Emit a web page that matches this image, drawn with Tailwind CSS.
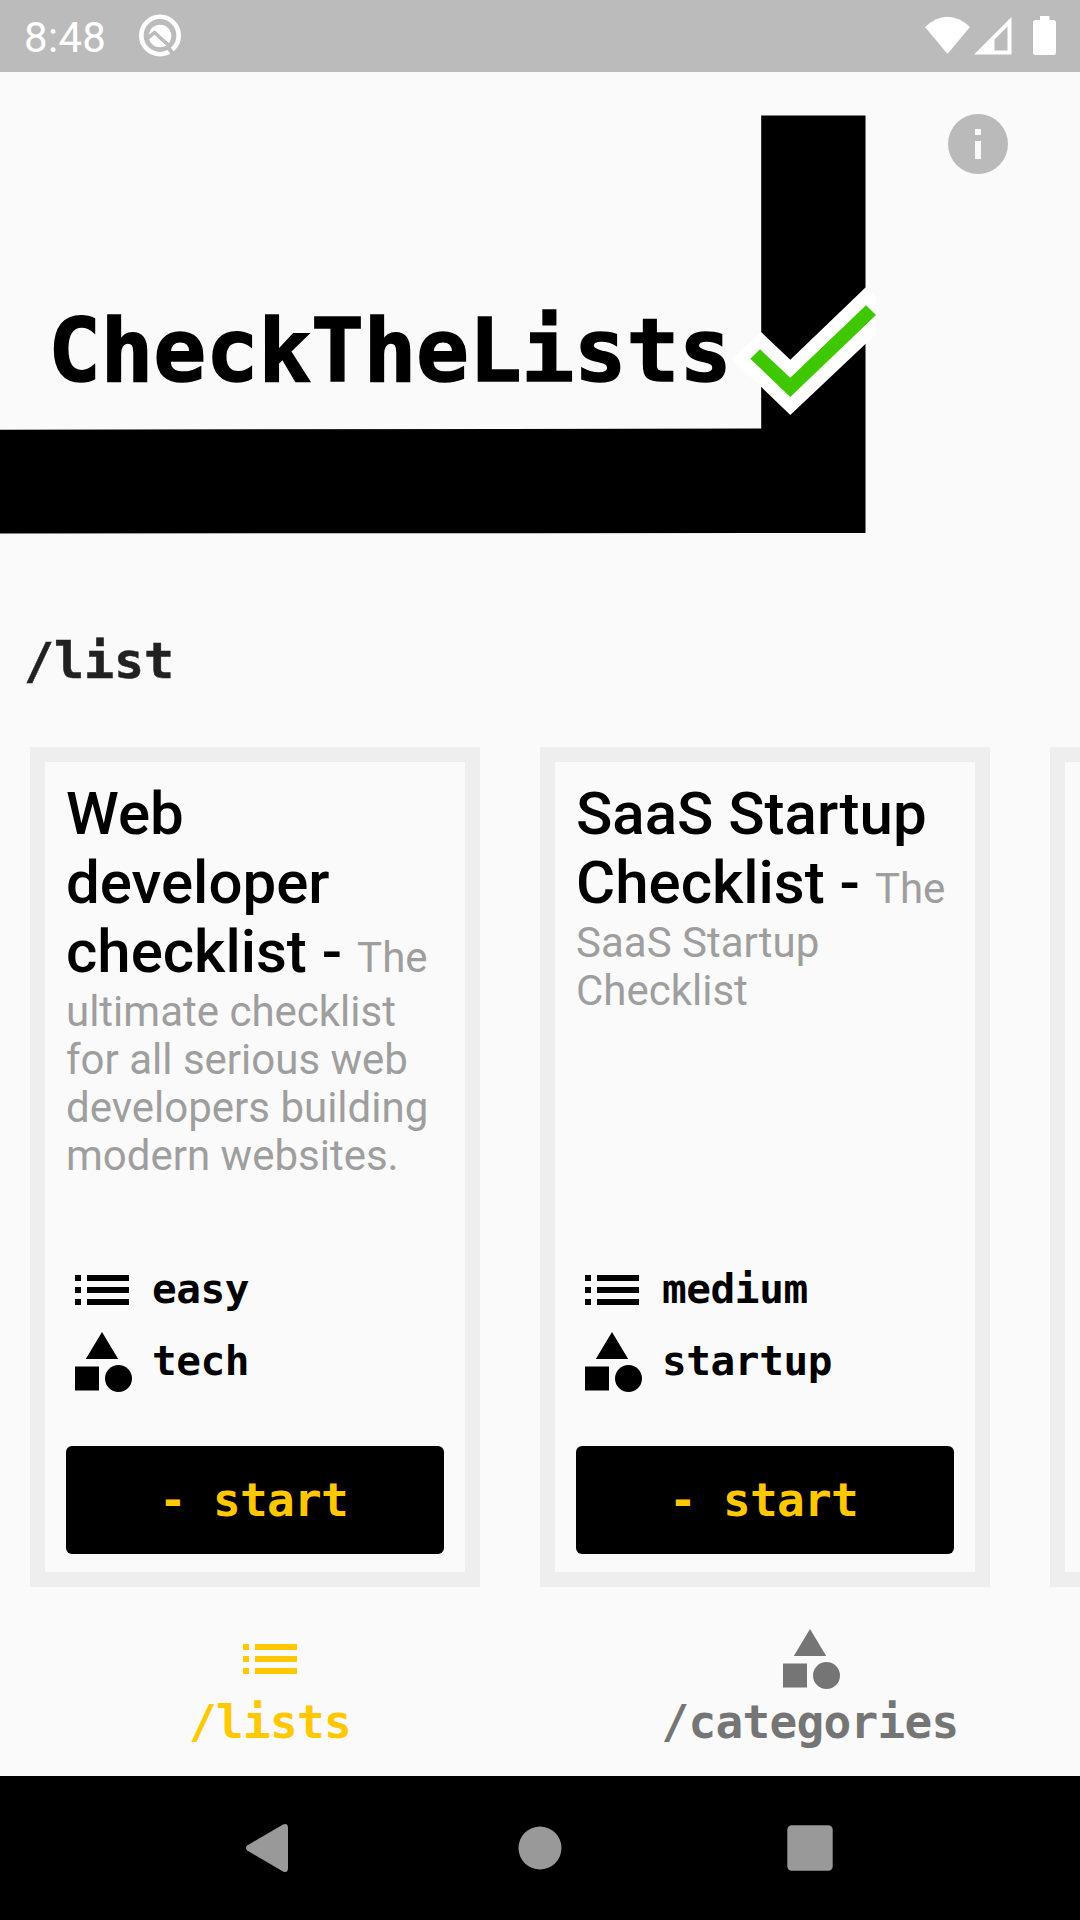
<!DOCTYPE html>
<html lang="en">
<head>
<meta charset="utf-8">
<title>CheckTheLists</title>
<script src="https://cdn.jsdelivr.net/npm/@tailwindcss/browser@4"></script>
</head>
<body class="bg-[#fafafa]">
<svg class="hidden">
  <symbol id="list" viewBox="0 0 24 24"><path d="M3 7h2v2H3zM3 11h2v2H3zM3 15h2v2H3zM7 7h14v2H7zM7 11h14v2H7zM7 15h14v2H7z"/></symbol>
  <symbol id="category" viewBox="0 0 24 24"><path d="M12 2 6.6 11h10.8zM3 13.500h8v8H3z"/><circle cx="17.500" cy="17.500" r="4.500"/></symbol>
</svg>
<div class="flex h-[1920px] w-[1080px] flex-col overflow-hidden bg-[#fafafa] font-['Roboto',sans-serif]">
  <!-- status bar -->
  <div class="flex h-[72px] shrink-0 items-start bg-[#bbbbbb] text-white">
    <span class="w-[138px] pl-[24px] text-[42px] leading-[76px] tracking-[0.3px]">8:48</span>
    <svg class="mt-[14px] h-[44px] w-[44px]" viewBox="138 14 44 44">
      <circle cx="160" cy="35.500" r="18.700" fill="none" stroke="#fff" stroke-width="4.600"/>
      <circle cx="160" cy="36" r="11.300" fill="#fff"/>
      <path d="M147 38.500L154.500 32.500 171 47.500" fill="none" stroke="#bbb" stroke-width="3.600"/>
      <path d="M167.500 46.500L174 55.500" fill="none" stroke="#bbb" stroke-width="4"/>
    </svg>
    <svg class="ml-auto mr-[20px] h-[72px] w-[140px]" viewBox="920 0 140 72" fill="#fff">
      <path d="M925 27Q947.500 6.500 970 27L947.500 54z"/>
      <path fill-rule="evenodd" d="M974 54.500H1011.500V17zM994.500 50.500V39.500L1007.500 26.500V50.500z"/>
      <path d="M1040 16h9.500v4h4a2.500 2.500 0 0 1 2.500 2.500v30a2.500 2.500 0 0 1-2.500 2.500h-18a2.500 2.500 0 0 1-2.500-2.500v-30a2.500 2.500 0 0 1 2.500-2.500h4.500z"/>
    </svg>
  </div>

  <!-- banner -->
  <header class="relative flex h-[540px] shrink-0 items-start justify-between">
    <svg class="absolute inset-0 h-[540px] w-[1080px]" viewBox="0 72 1080 540">
      <path d="M0 429.700L761.200 428.600V115.500H865.500V533L0 533.500z"/>
      <path d="M732 358.700L761 332 790.300 359.700 865.500 287.500 876 297V334L790.300 415z" fill="#fff"/>
      <path d="M750.300 358.700L760 349.300 790.300 377.700 866 305.300 876 315 790.300 397z" fill="#3fc800"/>
    </svg>
    <h1 class="relative mt-[234px] pl-[48px] font-['DejaVu_Sans_Mono',monospace] text-[88px] leading-[90px] font-bold tracking-[-0.4px] [-webkit-text-stroke:1.5px_black]">CheckTheLists</h1>
    <svg class="relative mt-[36px] mr-[66px] h-[72px] w-[72px]" viewBox="0 0 24 24" fill="#bababa"><path d="M12 2a10 10 0 1 0 0 20 10 10 0 0 0 0-20zm1 15h-2v-6h2zm0-8h-2V7h2z"/></svg>
  </header>

  <h2 class="h-[135px] shrink-0 pl-[24px] pt-[19px] font-['DejaVu_Sans_Mono',monospace] text-[50px] leading-[60px] font-bold tracking-[-0.1px] text-[#212121] [-webkit-text-stroke:0.5px_#212121]">/list</h2>

  <!-- cards -->
  <main class="flex h-[840px] shrink-0 gap-[60px] pl-[30px]">
    <article class="flex w-[450px] shrink-0 flex-col border-[15px] border-[#eeeeee] px-[21px] pt-[17px] pb-[18px]">
      <div class="h-[475px] text-[42px] leading-[48px] whitespace-nowrap text-[#9e9e9e]">
        <div><span class="text-[60px] leading-[69px] font-medium text-black">Web<br>developer<br>checklist - </span>The</div>
        <div class="mt-[2px]">ultimate checklist<br>for all serious web<br>developers building<br>modern websites.</div>
      </div>
      <div class="flex h-[72px] gap-[14px] font-['DejaVu_Sans_Mono',monospace] text-[41px] leading-[71px] font-bold tracking-[-0.4px]"><svg class="h-[72px] w-[72px]"><use href="#list"/></svg>easy</div>
      <div class="flex h-[72px] gap-[14px] font-['DejaVu_Sans_Mono',monospace] text-[41px] leading-[70px] font-bold tracking-[-0.4px]"><svg class="h-[72px] w-[72px]"><use href="#category"/></svg>tech</div>
      <button class="mt-auto h-[108px] rounded-[6px] bg-black pr-[3px] font-['DejaVu_Sans_Mono',monospace] text-[46px] leading-[106px] font-bold tracking-[-0.7px] text-[#ffc800]">- start</button>
    </article>
    <article class="flex w-[450px] shrink-0 flex-col border-[15px] border-[#eeeeee] px-[21px] pt-[17px] pb-[18px]">
      <div class="h-[475px] text-[42px] leading-[48px] whitespace-nowrap text-[#9e9e9e]">
        <div><span class="text-[60px] leading-[69px] font-medium text-black">SaaS Startup<br>Checklist - </span>The</div>
        <div class="mt-[2px]">SaaS Startup<br>Checklist</div>
      </div>
      <div class="flex h-[72px] gap-[14px] font-['DejaVu_Sans_Mono',monospace] text-[41px] leading-[71px] font-bold tracking-[-0.4px]"><svg class="h-[72px] w-[72px]"><use href="#list"/></svg>medium</div>
      <div class="flex h-[72px] gap-[14px] font-['DejaVu_Sans_Mono',monospace] text-[41px] leading-[70px] font-bold tracking-[-0.4px]"><svg class="h-[72px] w-[72px]"><use href="#category"/></svg>startup</div>
      <button class="mt-auto h-[108px] rounded-[6px] bg-black pr-[3px] font-['DejaVu_Sans_Mono',monospace] text-[46px] leading-[106px] font-bold tracking-[-0.7px] text-[#ffc800]">- start</button>
    </article>
    <article class="w-[450px] shrink-0 border-[15px] border-[#eeeeee]"></article>
  </main>

  <!-- tabs -->
  <nav class="grid h-[189px] shrink-0 grid-cols-2 pt-[36px] font-['DejaVu_Sans_Mono',monospace] text-[46px] leading-[54px] font-bold tracking-[-0.7px]">
    <a class="flex flex-col items-center text-[#ffc800]"><svg class="h-[72px] w-[72px] fill-current"><use href="#list"/></svg>/lists</a>
    <a class="flex flex-col items-center text-[#757575]"><svg class="h-[72px] w-[72px] fill-current"><use href="#category"/></svg>/categories</a>
  </nav>

  <!-- system navigation -->
  <div class="flex h-[144px] shrink-0 items-center justify-center gap-[198px] bg-black">
    <svg class="h-[72px] w-[72px]" viewBox="234 1812 72 72" fill="#999"><path d="M247.200 1845.500L283 1824.500Q288 1822.500 288 1828V1868Q288 1873.500 283 1871.500L247.200 1850.500Q244.800 1848 247.200 1845.500z"/></svg>
    <svg class="h-[72px] w-[72px]" viewBox="0 0 72 72" fill="#999"><circle cx="36" cy="36" r="21.500"/></svg>
    <svg class="h-[72px] w-[72px]" viewBox="0 0 72 72" fill="#999"><rect x="13.300" y="13.300" width="45.400" height="45.400" rx="4.500"/></svg>
  </div>
</div>
</body>
</html>
